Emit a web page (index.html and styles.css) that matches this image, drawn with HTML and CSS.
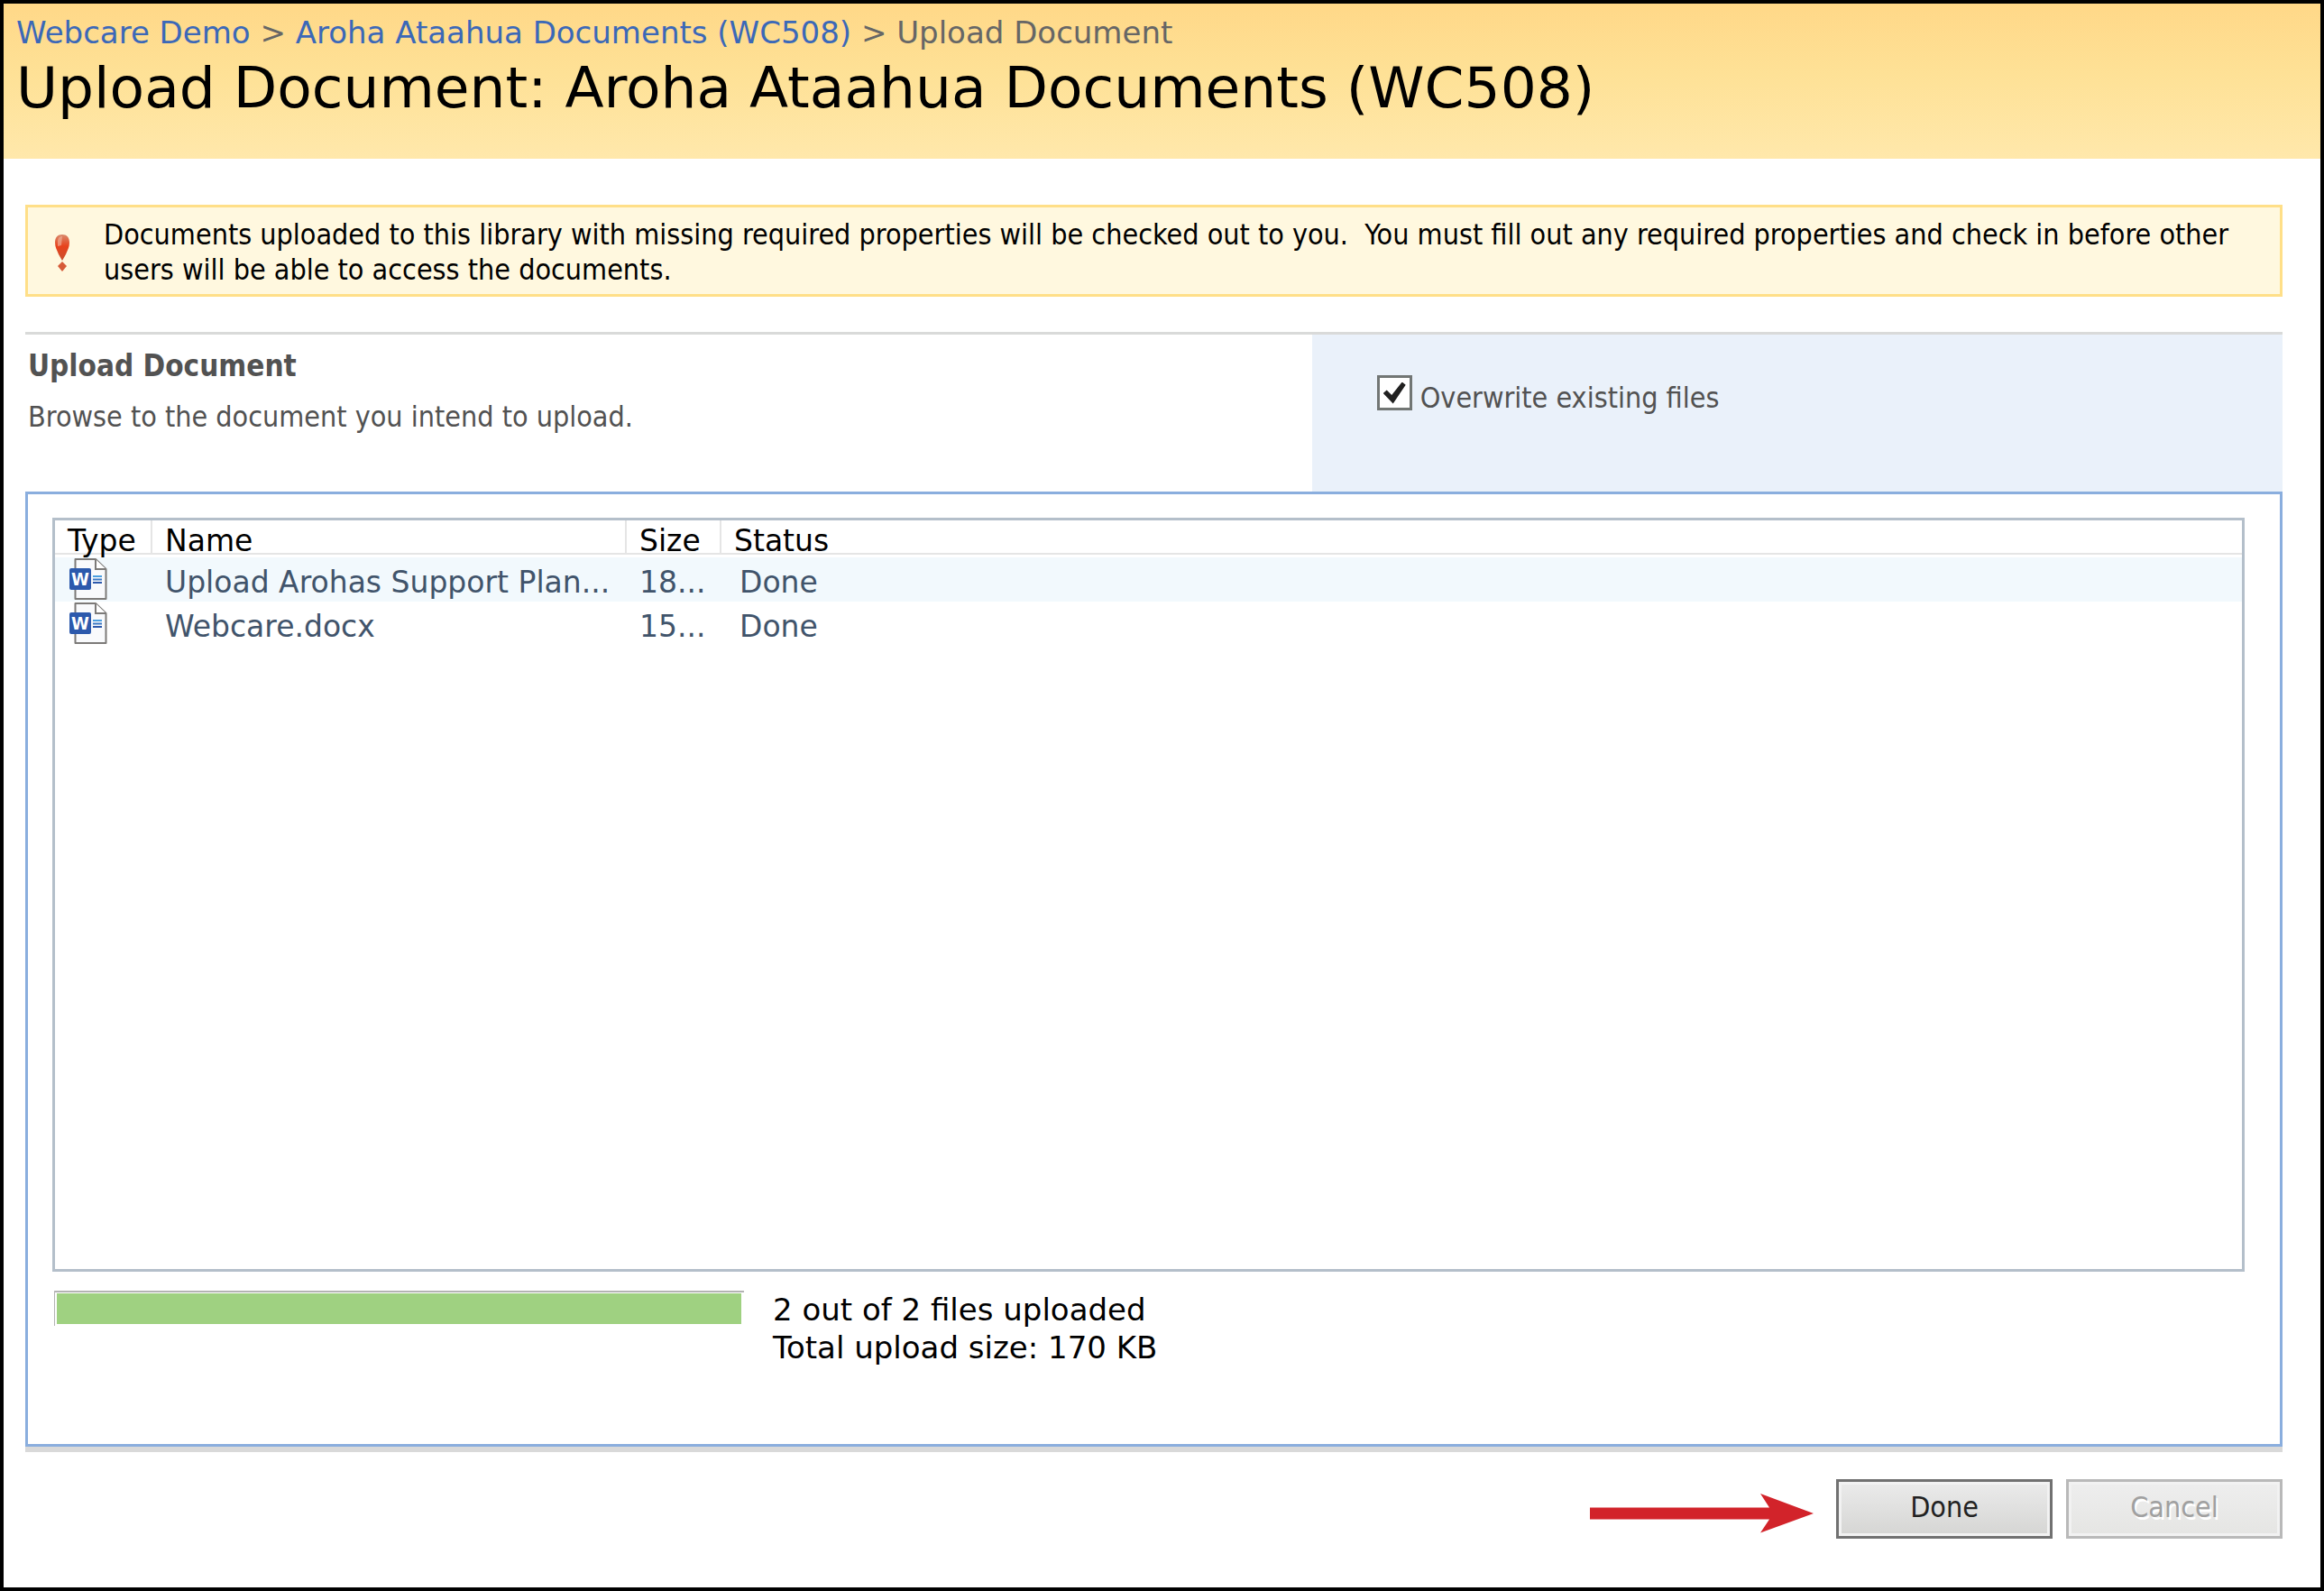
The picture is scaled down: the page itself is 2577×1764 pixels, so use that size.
FILE: index.html
```html
<!DOCTYPE html>
<html lang="en">
<head>
    <meta charset="UTF-8">
    <meta name="viewport" content="width=device-width, initial-scale=1.0">
    <title>Upload Document: Aroha Ataahua Documents (WC508)</title>
    <link rel="stylesheet" href="styles.css">
</head>
<body>
    <header class="page-header">
        <nav class="breadcrumb">
            <a href="#">Webcare Demo</a> &gt;
            <a href="#">Aroha Ataahua Documents (WC508)</a> &gt;
            <span>Upload Document</span>
        </nav>
        <h1 class="title">Upload Document: Aroha Ataahua Documents (WC508)</h1>
    </header>

    <main class="content">
        <div class="notice">
            <svg class="notice-icon" viewBox="0 0 18 42" aria-hidden="true">
                <defs>
                    <linearGradient id="alert" x1="0" y1="0" x2="0" y2="1">
                        <stop offset="0" stop-color="#d98a6c"/>
                        <stop offset="0.45" stop-color="#e8421c"/>
                        <stop offset="1" stop-color="#c9502f"/>
                    </linearGradient>
                </defs>
                <path d="M9 1C14 1 17 4 17 10C17 15 15 18 13 23L9 30L5 23C3 18 1 15 1 10C1 4 4 1 9 1Z" fill="url(#alert)"/>
                <path d="M4 9C4 5 6 3 9 3L8 13L4 14Z" fill="#f0b9a4" opacity="0.6"/>
                <path d="M9 31L14 36L9 42L4 36Z" fill="#d65a38"/>
            </svg>
            <p>Documents uploaded to this library with missing required properties will be checked out to you.&nbsp; You must fill out any required properties and check in before other users will be able to access the documents.</p>
        </div>

        <section class="section">
            <div class="section-info">
                <h2>Upload Document</h2>
                <p>Browse to the document you intend to upload.</p>
            </div>
            <div class="section-options">
                <input type="checkbox" id="overwrite" class="checkbox" checked>
                <label for="overwrite">Overwrite existing files</label>
            </div>
        </section>

        <section class="upload-box">
            <div class="file-list">
                <table>
                    <colgroup>
                        <col class="col-type">
                        <col class="col-name">
                        <col class="col-size">
                        <col>
                    </colgroup>
                    <thead>
                        <tr>
                            <th><div>Type</div></th>
                            <th><div>Name</div></th>
                            <th><div>Size</div></th>
                            <th><div>Status</div></th>
                        </tr>
                    </thead>
                    <tbody>
                        <tr>
                            <td class="type">
                                <svg class="doc-icon" viewBox="0 0 42 46" role="img" aria-label="Word document">
                                    <path d="M6.500 1H29L40.500 12V45H6.500Z" fill="#f9fafc" stroke="#7c7a78" stroke-width="2" stroke-linejoin="round"/>
                                    <path d="M29 1V12H40.500" fill="#fff" stroke="#7c7a78" stroke-width="2"/>
                                    <rect x="0" y="11" width="24" height="24" rx="2" fill="#2c59ac"/>
                                    <text x="12" y="30" class="doc-letter">W</text>
                                    <path d="M26 20H36" stroke="#4b9fe0" stroke-width="2"/>
                                    <path d="M26 23.500H36" stroke="#3a78c4" stroke-width="2"/>
                                    <path d="M26 27H36" stroke="#2c59ac" stroke-width="2"/>
                                </svg>
                            </td>
                            <td>Upload Arohas Support Plan...</td>
                            <td>18...</td>
                            <td class="status">Done</td>
                        </tr>
                        <tr>
                            <td class="type">
                                <svg class="doc-icon" viewBox="0 0 42 46" role="img" aria-label="Word document">
                                    <path d="M6.500 1H29L40.500 12V45H6.500Z" fill="#f9fafc" stroke="#7c7a78" stroke-width="2" stroke-linejoin="round"/>
                                    <path d="M29 1V12H40.500" fill="#fff" stroke="#7c7a78" stroke-width="2"/>
                                    <rect x="0" y="11" width="24" height="24" rx="2" fill="#2c59ac"/>
                                    <text x="12" y="30" class="doc-letter">W</text>
                                    <path d="M26 20H36" stroke="#4b9fe0" stroke-width="2"/>
                                    <path d="M26 23.500H36" stroke="#3a78c4" stroke-width="2"/>
                                    <path d="M26 27H36" stroke="#2c59ac" stroke-width="2"/>
                                </svg>
                            </td>
                            <td>Webcare.docx</td>
                            <td>15...</td>
                            <td class="status">Done</td>
                        </tr>
                    </tbody>
                </table>
            </div>

            <div class="progress-row">
                <div class="progress">
                    <div class="progress-bar" style="width: 100%"></div>
                </div>
                <p>2 out of 2 files uploaded<br>Total upload size: 170 KB</p>
            </div>
        </section>

        <div class="btn-container">
            <svg class="arrow" viewBox="0 0 248 44" aria-hidden="true">
                <path d="M0 15.500H199L189 0L248 22L189 43.500L199 28.500H0Z" fill="#d2232a"/>
            </svg>
            <button type="button" class="btn">Done</button>
            <button type="button" class="btn" disabled>Cancel</button>
        </div>
    </main>
</body>
</html>
```

FILE: styles.css
```css
* {
    box-sizing: border-box;
    margin: 0;
    padding: 0;
}

body {
    min-height: 100vh;
    border: 4px solid #000;
    background-color: #fff;
    color: #000;
    font-family: "DejaVu Sans Condensed", "DejaVu Sans", Tahoma, sans-serif;
    font-size: 32px;
    line-height: 39px;
}

.page-header {
    height: 172px;
    padding: 12px 14px;
    background: linear-gradient(#ffd888, #fee196 45%, #ffe8ab);
    font-family: "DejaVu Sans", Verdana, sans-serif;
}

.breadcrumb {
    color: #666;
    font-size: 34px;
    line-height: 40px;
}

.breadcrumb a {
    color: #3b68b8;
    text-decoration: none;
}

.title {
    font-size: 63px;
    font-weight: normal;
    line-height: 84px;
}

.content {
    padding: 51px 42px 0 24px;
}

.notice {
    display: flex;
    align-items: center;
    height: 102px;
    padding: 4px 30px 0 29px;
    border: 3px solid #ffdf88;
    background-color: #fff8df;
}

.notice-icon {
    flex: none;
    width: 18px;
    height: 42px;
    margin-right: 37px;
}

.section {
    display: flex;
    height: 177px;
    margin-top: 39px;
    border-top: 3px solid #d9dad9;
    color: #525252;
}

.section-info {
    width: 57%;
    padding: 15px 3px;
}

.section-info h2 {
    margin-bottom: 18px;
    font-size: 33px;
    line-height: 39px;
}

.section-options {
    display: flex;
    flex: 1;
    align-items: flex-start;
    gap: 9px;
    padding: 45px 72px;
    background-color: #eaf1fa;
}

.section-options label {
    padding-top: 6px;
}

.checkbox {
    display: flex;
    align-items: center;
    justify-content: center;
    width: 39px;
    height: 39px;
    border: 3px solid #727674;
    background-color: #fff;
    appearance: none;
}

.checkbox:checked::before {
    content: "";
    width: 25px;
    height: 24px;
    background-color: #202020;
    clip-path: polygon(0 52%, 16% 38%, 38% 60%, 84% 0, 100% 14%, 44% 100%);
}

.upload-box {
    height: 1059px;
    padding: 26px 39px 26px 27px;
    border: 3px solid #8aaede;
    box-shadow: 0 6px 0 #d9d9d9;
    font-family: "DejaVu Sans", Verdana, sans-serif;
    font-size: 33px;
}

.file-list {
    height: 836px;
    border: 3px solid #b4bfca;
}

table {
    width: 100%;
    border-collapse: collapse;
    table-layout: fixed;
}

.col-type {
    width: 108px;
}

.col-name {
    width: 526px;
}

.col-size {
    width: 105px;
}

th {
    height: 41px;
    font-weight: normal;
    text-align: left;
    vertical-align: top;
}

th div {
    height: 38px;
    padding: 10px 0 0 14px;
    border-right: 2px solid #e5e5e5;
    border-bottom: 2px solid #e5e5e5;
    line-height: 26px;
}

th:last-child div {
    border-right: none;
}

td {
    height: 49px;
    padding: 5px 0 0 14px;
    color: #41546b;
    white-space: nowrap;
}

td.type {
    padding: 0 0 2px 16px;
}

td.status {
    padding-left: 20px;
}

tbody tr:nth-child(odd) {
    background-color: #f2f9fd;
}

.doc-icon {
    display: block;
    width: 42px;
    height: 46px;
}

.doc-letter {
    fill: #fff;
    font-family: "DejaVu Sans Condensed", sans-serif;
    font-size: 20px;
    font-weight: bold;
    text-anchor: middle;
}

.progress-row {
    display: flex;
    gap: 32px;
    margin-top: 21px;
    padding-left: 2px;
    font-size: 34px;
    line-height: 42px;
}

.progress {
    width: 765px;
    height: 39px;
    padding: 1px 3px 2px 2px;
    border-top: 2px solid #b3b3b3;
    border-left: 1px solid #b3b3b3;
}

.progress-bar {
    height: 100%;
    background-color: #9fd181;
}

.btn-container {
    display: flex;
    align-items: center;
    justify-content: flex-end;
    gap: 15px;
    margin-top: 36px;
}

.arrow {
    width: 248px;
    height: 44px;
    margin: 10px 10px 0 0;
}

.btn {
    width: 240px;
    height: 66px;
    padding-bottom: 5px;
    border: 3px solid #717171;
    background: linear-gradient(#ebebeb, #d5d5d3);
    box-shadow: inset 0 0 0 3px #f2f2f2;
    color: #222;
    font-family: inherit;
    font-size: 32px;
}

.btn:disabled {
    border-color: #b9b9b9;
    background: linear-gradient(#eee, #e5e5e3);
    color: #a0a0a0;
    text-shadow: 2px 3px 0 #fff;
}
```
